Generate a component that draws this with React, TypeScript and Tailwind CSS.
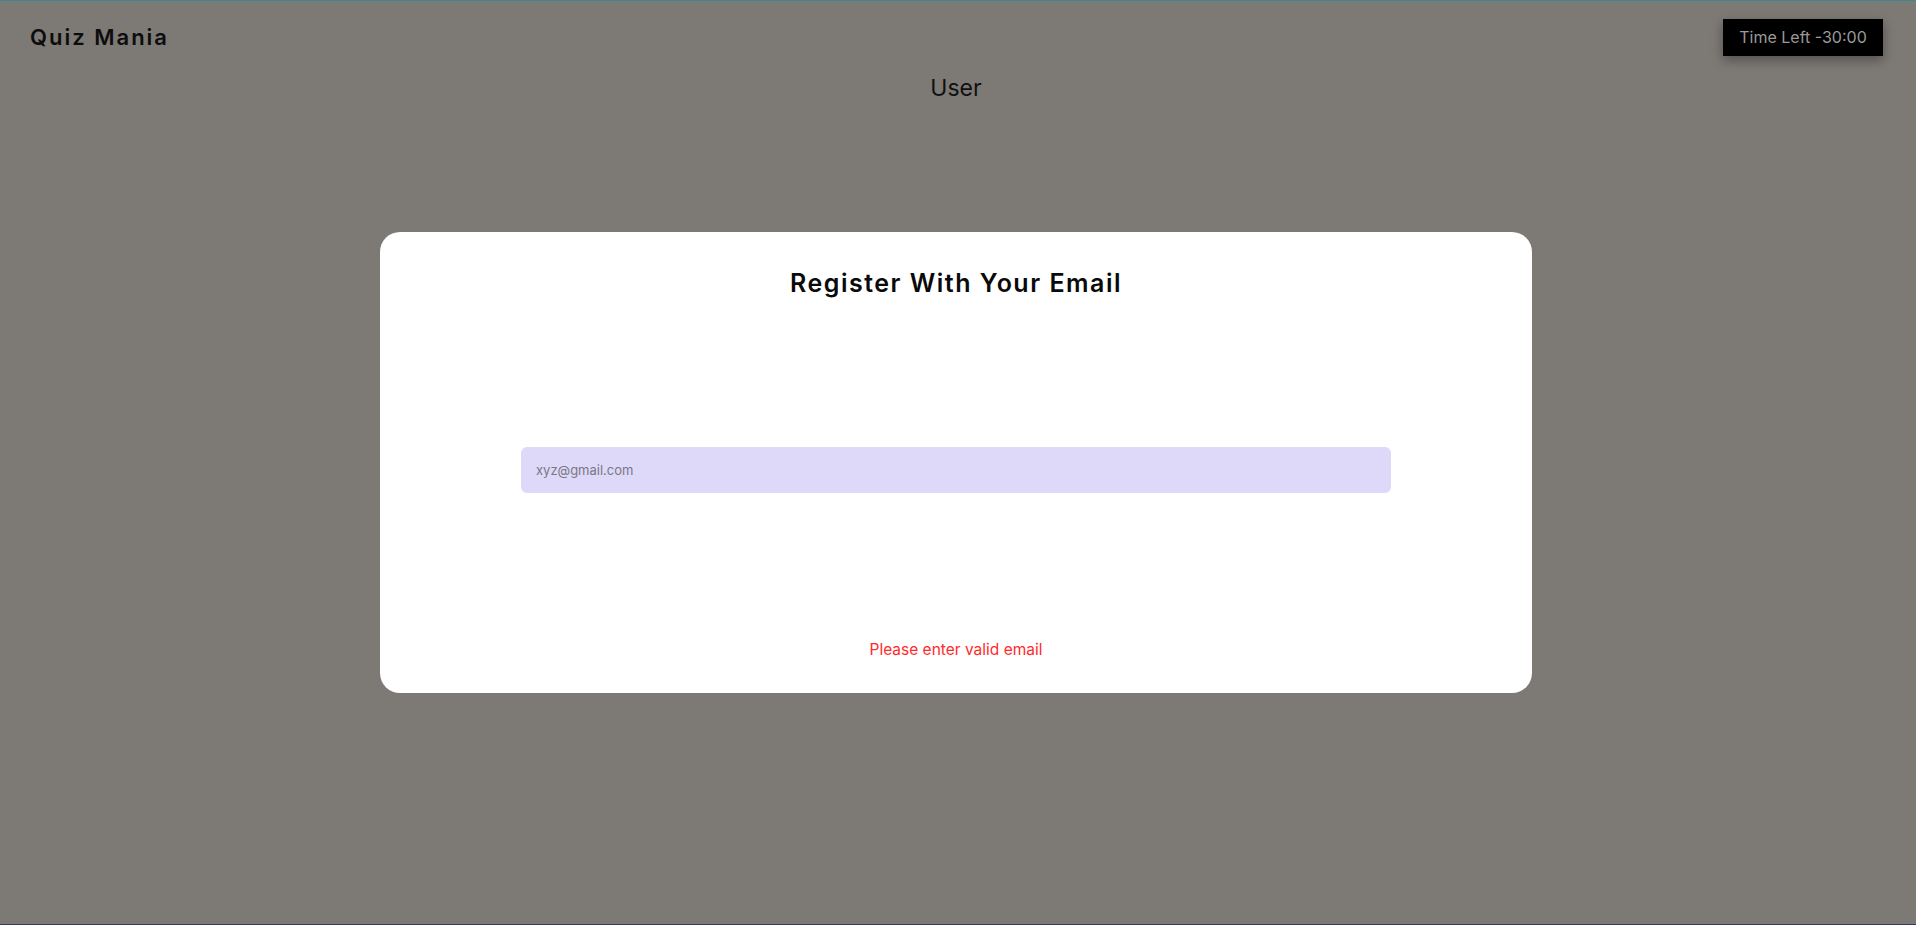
import React from "react";

export default function App() {
  return (
    <div
      className="w-full h-[925px] bg-[#7d7975] border-t border-t-[#3b8a92] border-b border-b-[#2e3a6e] flex flex-col"
      style={{ fontFamily: "Inter, 'Noto Sans', sans-serif" }}
    >
      <header className="h-[72px] flex items-center justify-between pl-[30px] pr-[33px]">
        <div className="text-[22px] font-semibold tracking-[2px] text-[#0d0d0d]">Quiz Mania</div>
        <div className="w-[160px] h-[37px] bg-black flex items-center justify-center text-[16px] text-[#9a9a9a] shadow-[0_4px_12px_rgba(0,0,0,0.35)]">
          Time Left -30:00
        </div>
      </header>
      <div className="flex flex-col pr-[4px]">
        <div className="h-[30px] leading-[30px] text-center text-[23px] text-[#111]">User</div>
        <div className="mt-[129px] mx-auto w-[1152px] h-[461px] bg-white rounded-[20px] flex flex-col items-center">
          <h1 className="mt-[35px] h-[32px] leading-[32px] text-[25px] font-semibold tracking-[1.5px] text-[#0a0a0a]">
            Register With Your Email
          </h1>
          <input
            type="email"
            placeholder="xyz@gmail.com"
            className="mt-[148px] w-[870px] h-[46px] rounded-[6px] bg-[#ded8f9] px-[15px] text-[13px] text-[#333] placeholder:text-[#7a7785] outline-none"
          />
          <div className="mt-[145px] h-[24px] leading-[24px] text-[15.5px] text-[#ff2a2a]">Please enter valid email</div>
        </div>
      </div>
    </div>
  );
}
